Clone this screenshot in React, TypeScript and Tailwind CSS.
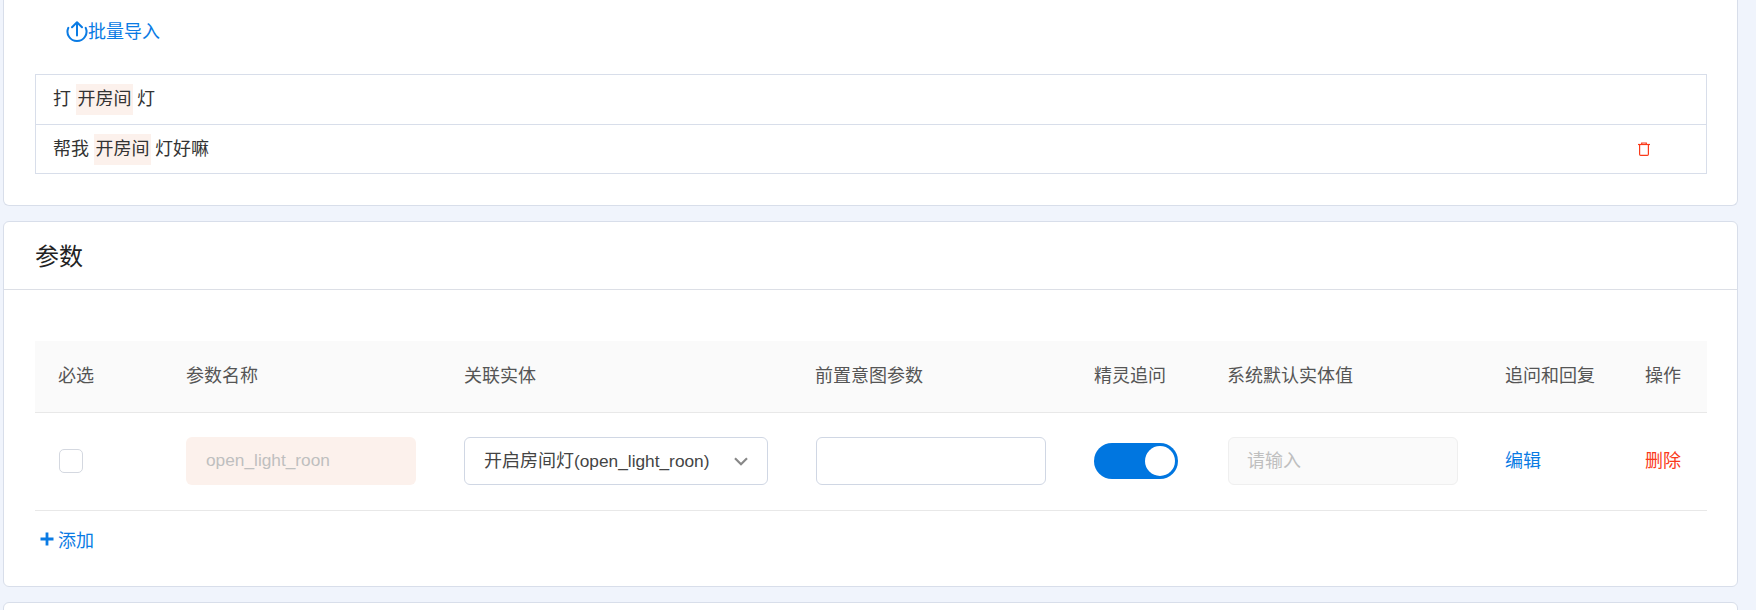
const font = { fontFamily: '"Liberation Sans", "Noto Sans CJK SC", sans-serif' };

function Card({ className, children }: { className: string; children?: React.ReactNode }) {
  return (
    <div className={`bg-white border border-[#d8deea] rounded-[6px] ml-[3px] w-[1735px] ${className}`}>
      {children}
    </div>
  );
}

function Mark({ children }: { children: string }) {
  return <span className="inline-block bg-[#fcf1ec] px-[1.5px] ml-[5px] mr-[4px] leading-[31px]">{children}</span>;
}

function Upload() {
  return (
    <svg width="22" height="22" viewBox="0 0 22 22" fill="none" stroke="#0a7be4" strokeWidth="2">
      <path d="M2.3 6.8A9.5 9.5 0 1 0 19.7 6.8" strokeLinecap="round" />
      <path d="M11 14.5V1.5M6 6.3L11 1.3l5 5" strokeLinecap="round" strokeLinejoin="round" />
    </svg>
  );
}

function Trash() {
  return (
    <svg width="14" height="14" viewBox="0 0 14 14" fill="none" stroke="#fa3a1a" strokeWidth="1.2">
      <path d="M1 2.5h12" />
      <path d="M4.7 2.5V1h4.6v1.5" />
      <path d="M2.6 2.5v9.7c0 .7.4 1.2 1.1 1.2h6.6c.7 0 1.1-.5 1.1-1.2V2.5" />
    </svg>
  );
}

const cols = 'grid grid-cols-[151px_278px_352px_278px_134px_278px_140px_61px]';

export default function App() {
  return (
    <div style={font} className="w-[1756px] h-[610px] overflow-hidden bg-[#f0f4fc] text-[18px] text-[#333]">
      <Card className="h-[207px] -mt-[1px] rounded-t-none border-t-0 pl-[31px] pr-[30px]">
        <div className="h-[75px] pl-[31px] pt-[22px]">
          <div className="flex items-center h-[22px] text-[#0a7be4]">
            <Upload />
            <span>批量导入</span>
          </div>
        </div>
        <div className="border border-[#d8deea]">
          <div className="h-[50px] pl-[17px] flex items-center border-b border-[#d8deea]">
            <span>打</span>
            <Mark>开房间</Mark>
            <span>灯</span>
          </div>
          <div className="h-[48px] pl-[17px] pr-[55px] flex items-center justify-between">
            <div className="flex items-center">
              <span>帮我</span>
              <Mark>开房间</Mark>
              <span>灯好嘛</span>
            </div>
            <Trash />
          </div>
        </div>
      </Card>

      <Card className="h-[366px] mt-[15px]">
        <div className="h-[68px] pl-[31px] pt-[2px] flex items-center border-b border-[#dcdfe6] text-[24px] text-[#222]">
          参数
        </div>
        <div className="pt-[51px] pl-[31px] pr-[30px]">
          <div className={`${cols} h-[72px] items-center bg-[#fafafa] border-b border-[#e8e8e8] text-[#555]`}>
            <span className="pl-[23px]">必选</span>
            <span>参数名称</span>
            <span>关联实体</span>
            <span className="-ml-[1px]">前置意图参数</span>
            <span>精灵追问</span>
            <span className="-ml-[1px]">系统默认实体值</span>
            <span className="-ml-[1px]">追问和回复</span>
            <span className="-ml-[1px]">操作</span>
          </div>
          <div className={`${cols} h-[98px] pb-[1px] items-center border-b border-[#e8e8e8]`}>
            <div className="pl-[24px]">
              <div className="w-[24px] h-[24px] border border-[#d4d8e0] rounded-[5px] bg-white" />
            </div>
            <div className="w-[230px] h-[48px] rounded-[6px] bg-[#fcf1ec] flex items-center pl-[20px] text-[17.3px] text-[#bfbfbf]">
              open_light_roon
            </div>
            <div className="w-[304px] h-[48px] rounded-[6px] bg-white border border-[#d0d7e4] flex items-center justify-between pl-[19px] pr-[19px] text-[#444]">
              <span>
                开启房间灯<span className="text-[17.3px]">(open_light_roon)</span>
              </span>
              <svg width="14" height="9" viewBox="0 0 14 9" fill="none" stroke="#888" strokeWidth="2.2">
                <path d="M1 1.2l6 6 6-6" />
              </svg>
            </div>
            <div className="w-[230px] h-[48px] rounded-[6px] bg-white border border-[#d0d7e4]" />
            <div className="w-[84px] h-[36px] rounded-full bg-[#0076e0] flex items-center justify-end pr-[3px]">
              <div className="w-[30px] h-[30px] rounded-full bg-white" />
            </div>
            <div className="w-[230px] h-[48px] rounded-[6px] bg-[#fafafa] border border-[#efefef] flex items-center pl-[18px] text-[#bfbfbf]">
              请输入
            </div>
            <span className="-ml-[1px] text-[#0a7be4]">编辑</span>
            <span className="-ml-[1px] text-[#fa3a1a]">删除</span>
          </div>
          <div className="flex items-center h-[60px] pl-[5px] text-[#0a7be4]">
            <svg width="14" height="14" viewBox="0 0 14 14" className="mr-[4px] -mt-[5px]" fill="#0a7be4">
              <path d="M5.6 0.5h2.8v5.1h5.1v2.8H8.4v5.1H5.6V8.4H.5V5.6h5.1z" />
            </svg>
            <span>添加</span>
          </div>
        </div>
      </Card>

      <Card className="h-[40px] mt-[15px]" />
    </div>
  );
}
